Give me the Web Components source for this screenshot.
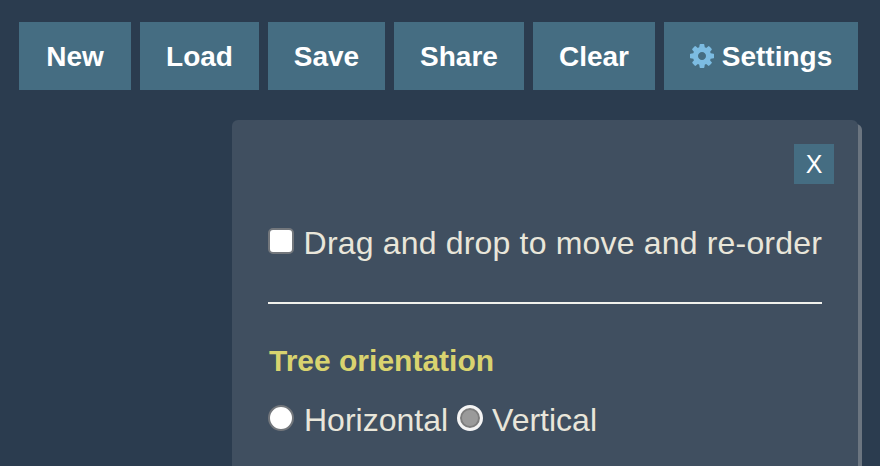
<!DOCTYPE html>
<html>
<head>
<meta charset="utf-8">
<style>
html,body{margin:0;padding:0;height:466px;overflow:hidden;background:#2b3c4f;}
body{font-family:"Liberation Sans",Arial,sans-serif;}
</style>
</head>
<body>
<app-toolbar>
  <tool-button style="width:112px">New</tool-button>
  <tool-button style="width:119px">Load</tool-button>
  <tool-button style="width:117px">Save</tool-button>
  <tool-button style="width:130px">Share</tool-button>
  <tool-button style="width:122px">Clear</tool-button>
  <tool-button style="width:194px" icon="gear">Settings</tool-button>
</app-toolbar>
<settings-panel>
  <option-check>Drag and drop to move and re-order</option-check>
  <option-radios title="Tree orientation"></option-radios>
</settings-panel>

<script>
class AppToolbar extends HTMLElement {
    constructor(){
        super();
        this.attachShadow({mode:'open'});
        this.shadowRoot.innerHTML=`
        <style>
        :host{
            display:flex;
            gap:9px;
            padding:22px 22px 0 19px;
        }
        </style>
        <slot></slot>`;
    }
}
class ToolButton extends HTMLElement {
    constructor(){
        super();
        this.attachShadow({mode:'open'});
        const gear = this.getAttribute('icon') === 'gear' ? `
            <svg width="24" height="24" viewBox="128 128 1536 1536"><path fill="#7cbce2" d="M1152 896q0-106-75-181t-181-75-181 75-75 181 75 181 181 75 181-75 75-181zm512-109v222q0 12-8 23t-20 13l-185 28q-19 54-39 91 35 50 107 138 10 12 10 25t-9 23q-27 37-99 108t-94 71q-12 0-26-9l-138-108q-44 23-91 38-16 136-29 186-7 28-36 28h-222q-14 0-24.500-8.500t-11.500-21.500l-28-184q-49-16-90-37l-141 107q-10 9-25 9-14 0-25-11-126-114-165-168-7-10-7-23 0-12 8-23 15-21 51-66.500t54-70.500q-27-50-41-99l-183-27q-13-2-21-12.500t-8-23.500v-222q0-12 8-23t19-13l186-28q14-46 39-92-40-57-107-138-10-12-10-24 0-10 9-23 26-36 98.500-107.500t94.500-71.500q13 0 26 10l138 107q44-23 91-38 16-136 29-186 7-28 36-28h222q14 0 24.500 8.500t11.500 21.500l28 184q49 16 90 37l142-107q9-9 24-9 13 0 25 10 129 119 165 170 7 8 7 22 0 12-8 23-15 21-51 66.500t-54 70.500q26 50 41 98l183 28q13 2 21 12.500t8 23.500z"/></svg>` : '';
        this.shadowRoot.innerHTML=`
        <style>
        :host{
            display:flex;
            align-items:center;
            justify-content:center;
            gap:8px;
            height:68px;
            padding-top:1px;
            box-sizing:border-box;
            background:#456d82;
            color:#fff;
            font-size:28px;
            font-weight:700;
        }
        svg{display:block;margin-top:-1px;}
        </style>
        ${gear}<slot></slot>`;
    }
}
class SettingsPanel extends HTMLElement {
    constructor(){
        super();
        this.attachShadow({mode:'open'});
        this.shadowRoot.innerHTML=`
        <style>
        :host{
            display:block;
            box-sizing:border-box;
            width:626px;
            height:370px;
            margin:30px 0 0 232px;
            padding:24px 36px 0 36px;
            background:#404f60;
            border-radius:6px;
            box-shadow:4px 4px 0 #6b7580;
            color:#e9e6da;
            font-size:32px;
        }
        .top{display:flex;justify-content:flex-end;margin-right:-12px;}
        .close{
            width:40px;height:40px;
            display:flex;align-items:center;justify-content:center;
            background:#456d82;
            color:#fff;
            font-size:25px;
        }
        </style>
        <div class="top"><div class="close">X</div></div>
        <slot></slot>`;
    }
}
class OptionCheck extends HTMLElement {
    constructor(){
        super();
        this.attachShadow({mode:'open'});
        this.shadowRoot.innerHTML=`
        <style>
        :host{
            display:block;
            margin-top:38px;
            padding-bottom:37px;
            border-bottom:2px solid #f1f1ec;
        }
        .row{display:flex;align-items:center;gap:10px;height:43px;letter-spacing:.18px;white-space:nowrap;}
        .box{
            width:26px;height:26px;box-sizing:border-box;
            background:#fff;border:2px solid #73777c;border-radius:5px;
            margin-top:-6px;
        }
        </style>
        <div class="row"><span class="box"></span><span><slot></slot></span></div>`;
    }
}
class OptionRadios extends HTMLElement {
    constructor(){
        super();
        this.attachShadow({mode:'open'});
        this.shadowRoot.innerHTML=`
        <style>
        :host{display:block;margin-top:39px;}
        h3{margin:0 0 20px 1px;font-size:30px;line-height:36px;font-weight:700;color:#d9d36f;}
        .row{display:flex;align-items:center;height:42px;}
        .radio{
            width:26px;height:26px;box-sizing:border-box;border-radius:50%;
            background:#fff;border:2px solid #73777c;margin:-5px 10px 0 0;
        }
        .radio.on{background:#9a9a9a;border:3px solid #f4f4f4;box-shadow:inset 0 0 0 2px #7d7d7d;margin-right:9px;}
        .lab{margin-right:9px;}
        </style>
        <h3>${this.getAttribute('title')}</h3>
        <div class="row">
            <span class="radio"></span><span class="lab">Horizontal</span>
            <span class="radio on"></span><span>Vertical</span>
        </div>`;
    }
}
customElements.define('app-toolbar', AppToolbar);
customElements.define('tool-button', ToolButton);
customElements.define('settings-panel', SettingsPanel);
customElements.define('option-check', OptionCheck);
customElements.define('option-radios', OptionRadios);
</script>
</body>
</html>
